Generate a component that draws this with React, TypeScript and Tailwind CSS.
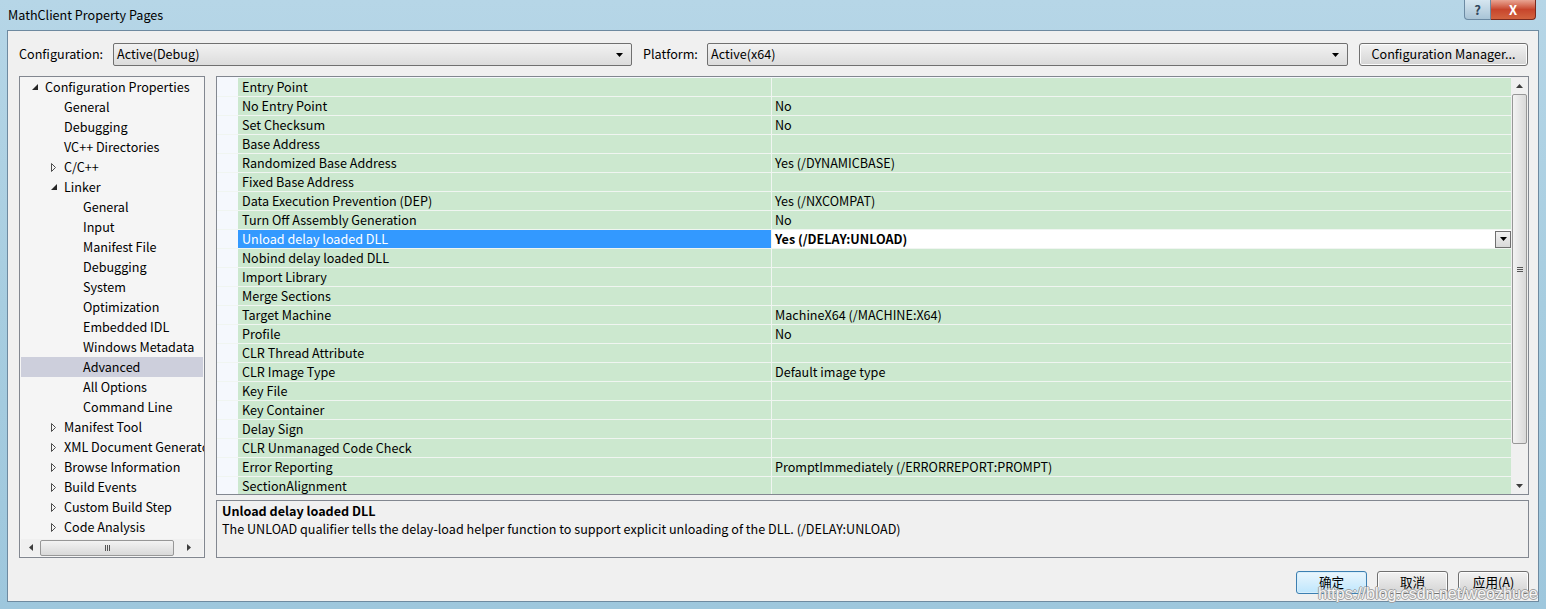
import React from 'react'

type TreeItem = { label: string; level: number; arrow?: 'open' | 'closed'; selected?: boolean }

const tree: TreeItem[] = [
  { label: 'Configuration Properties', level: 0, arrow: 'open' },
  { label: 'General', level: 1 },
  { label: 'Debugging', level: 1 },
  { label: 'VC++ Directories', level: 1 },
  { label: 'C/C++', level: 1, arrow: 'closed' },
  { label: 'Linker', level: 1, arrow: 'open' },
  { label: 'General', level: 2 },
  { label: 'Input', level: 2 },
  { label: 'Manifest File', level: 2 },
  { label: 'Debugging', level: 2 },
  { label: 'System', level: 2 },
  { label: 'Optimization', level: 2 },
  { label: 'Embedded IDL', level: 2 },
  { label: 'Windows Metadata', level: 2 },
  { label: 'Advanced', level: 2, selected: true },
  { label: 'All Options', level: 2 },
  { label: 'Command Line', level: 2 },
  { label: 'Manifest Tool', level: 1, arrow: 'closed' },
  { label: 'XML Document Generator', level: 1, arrow: 'closed' },
  { label: 'Browse Information', level: 1, arrow: 'closed' },
  { label: 'Build Events', level: 1, arrow: 'closed' },
  { label: 'Custom Build Step', level: 1, arrow: 'closed' },
  { label: 'Code Analysis', level: 1, arrow: 'closed' },
]

const props: [string, string][] = [
  ['Entry Point', ''],
  ['No Entry Point', 'No'],
  ['Set Checksum', 'No'],
  ['Base Address', ''],
  ['Randomized Base Address', 'Yes (/DYNAMICBASE)'],
  ['Fixed Base Address', ''],
  ['Data Execution Prevention (DEP)', 'Yes (/NXCOMPAT)'],
  ['Turn Off Assembly Generation', 'No'],
  ['Unload delay loaded DLL', 'Yes (/DELAY:UNLOAD)'],
  ['Nobind delay loaded DLL', ''],
  ['Import Library', ''],
  ['Merge Sections', ''],
  ['Target Machine', 'MachineX64 (/MACHINE:X64)'],
  ['Profile', 'No'],
  ['CLR Thread Attribute', ''],
  ['CLR Image Type', 'Default image type'],
  ['Key File', ''],
  ['Key Container', ''],
  ['Delay Sign', ''],
  ['CLR Unmanaged Code Check', ''],
  ['Error Reporting', 'PromptImmediately (/ERRORREPORT:PROMPT)'],
  ['SectionAlignment', ''],
]

const font = { fontFamily: '"Noto Sans CJK SC", "Noto Sans", sans-serif' }

function DownTri({ className = '' }: { className?: string }) {
  return (
    <svg width="7" height="4" viewBox="0 0 7 4" className={className}>
      <polygon points="0,0 7,0 3.5,4" fill="#000" />
    </svg>
  )
}

function Arrow({ kind }: { kind?: 'open' | 'closed' }) {
  if (kind === 'open')
    return (
      <svg width="6" height="6" viewBox="0 0 6 6">
        <polygon points="6,0 6,6 0,6" fill="#262626" />
      </svg>
    )
  if (kind === 'closed')
    return (
      <svg width="5" height="9" viewBox="0 0 5 9">
        <polygon points="0.5,0.5 4.5,4.5 0.5,8.5" fill="none" stroke="#4d4d4d" strokeWidth="1" />
      </svg>
    )
  return null
}

function Combo({ value, width }: { value: string; width: string }) {
  return (
    <div
      className={`${width} h-[23px] flex items-center justify-between pl-[3px] pr-[8px] border border-[#707070] rounded-[2px] bg-gradient-to-b from-[#f2f2f2] to-[#dcdcdc] text-[12.6px] text-black`}
    >
      <span>{value}</span>
      <DownTri />
    </div>
  )
}

function Btn({ label, primary, width = 'w-[71px]' }: { label: string; primary?: boolean; width?: string }) {
  return (
    <div
      className={`${width} h-[23px] flex items-center justify-center rounded-[3px] border text-[12.6px] leading-[16px] pb-[2px] text-black ${
        primary
          ? 'border-[#3c7fb1] bg-gradient-to-b from-[#eaf6fd] to-[#bee6fd] shadow-[inset_0_0_0_1px_#d8eefb]'
          : 'border-[#707070] bg-gradient-to-b from-[#f2f2f2] to-[#d4d4d4] shadow-[inset_0_0_0_1px_#fcfcfc]'
      }`}
    >
      {label}
    </div>
  )
}

export default function App() {
  return (
    <div
      className="w-[1546px] h-[609px] relative flex flex-col bg-gradient-to-b from-[#b6d6e7] via-[#a7cde0] to-[#9ec7dd] overflow-hidden"
      style={font}
    >
      {/* title bar */}
      <div className="h-[30px] flex items-center justify-between pl-[8px] pr-[10px] shrink-0">
        <span className="text-[12.6px] text-black">MathClient Property Pages</span>
        <div className="self-start flex">
          <div className="w-[27px] h-[20px] flex items-center justify-center border border-[#6b8aa3] border-t-0 rounded-bl-[4px] bg-gradient-to-b from-[#d6e6f0] to-[#a9c4d6] text-[13px] font-bold text-[#30465a]">
            ?
          </div>
          <div className="w-[45px] h-[20px] flex items-center justify-center border border-[#7a2a1e] border-t-0 border-l-0 rounded-br-[4px] bg-gradient-to-b from-[#e8a493] via-[#c7452c] to-[#d2633f] text-[13px] font-bold text-white">
            X
          </div>
        </div>
      </div>

      {/* client area */}
      <div className="flex-1 mx-[7px] mb-[7px] border border-[#6e8aa0] bg-[#f0f0f0] flex flex-col pl-[11px] pr-[9px] pt-[12px]">
        <div className="flex items-center h-[23px] text-[12.6px] text-black">
          <span className="w-[94px]">Configuration:</span>
          <Combo value="Active(Debug)" width="w-[519px]" />
          <span className="ml-[11px] w-[64px]">Platform:</span>
          <Combo value="Active(x64)" width="w-[641px]" />
          <div className="ml-[11px] w-[169px] h-[23px] flex items-center justify-center rounded-[3px] border border-[#707070] bg-gradient-to-b from-[#f2f2f2] to-[#d4d4d4] shadow-[inset_0_0_0_1px_#fcfcfc]">
            Configuration Manager...
          </div>
        </div>

        <div className="flex mt-[10px] h-[482px] gap-[11px]">
          {/* tree */}
          <div className="w-[186px] border border-[#828790] bg-[#f5f5f5] flex flex-col">
            <div className="flex-1 overflow-hidden">
              {tree.map((t, i) => (
                <div
                  key={i}
                  className={`h-[20px] flex items-center whitespace-nowrap text-[12.6px] text-black mx-[1px] ${
                    t.selected ? 'bg-[#cdcfdc]' : ''
                  }`}
                >
                  <div className="shrink-0" style={{ width: 11 + t.level * 19 }} />
                  <div className="w-[13px] shrink-0 flex items-center">
                    <Arrow kind={t.arrow} />
                  </div>
                  <span>{t.label}</span>
                </div>
              ))}
            </div>
            {/* horizontal scrollbar */}
            <div className="h-[17px] mb-[1px] flex items-center bg-[#f0f0f0] mx-[1px]">
              <div className="w-[19px] flex justify-center">
                <svg width="4" height="7" viewBox="0 0 4 7">
                  <polygon points="4,0 4,7 0,3.5" fill="#3d3d3d" />
                </svg>
              </div>
              <div className="w-[134px] h-[16px] rounded-[2px] border border-[#979797] bg-gradient-to-b from-[#f3f3f3] to-[#d9d9d9] flex items-center justify-center">
                <div className="flex gap-[1px]">
                  <div className="w-[1px] h-[6px] bg-[#555]" />
                  <div className="w-[1px] h-[6px] bg-[#555]" />
                  <div className="w-[1px] h-[6px] bg-[#555]" />
                </div>
              </div>
              <div className="flex-1 flex justify-center">
                <svg width="4" height="7" viewBox="0 0 4 7">
                  <polygon points="0,0 0,7 4,3.5" fill="#3d3d3d" />
                </svg>
              </div>
            </div>
          </div>

          {/* right side */}
          <div className="flex-1 flex flex-col gap-[5px]">
            <div className="h-[419px] border border-[#828790] bg-[#f5f8fd] flex overflow-hidden">
              <div className="flex-1 pt-[1px] overflow-hidden">
                {props.map(([name, val], i) => {
                  const sel = i === 8
                  return (
                    <div key={i} className="h-[19px] flex border-b border-[#f0f5f1] text-[12.6px] whitespace-nowrap">
                      <div className="w-[21px] shrink-0" />
                      <div
                        className={`w-[533px] shrink-0 pl-[4px] flex items-center ${
                          sel ? 'bg-[#3399ff] text-white' : 'bg-[#cce8cf] text-black'
                        }`}
                      >
                        {name}
                      </div>
                      <div className="w-[1px] shrink-0 bg-[#f0f5f1]" />
                      <div
                        className={`flex-1 flex items-center justify-between pl-[3px] ${
                          sel ? 'bg-white text-black font-bold' : 'bg-[#cce8cf] text-black'
                        }`}
                      >
                        <span>{val}</span>
                        {sel && (
                          <div className="w-[16px] h-[17px] border border-[#707070] bg-gradient-to-b from-[#f2f2f2] to-[#d9d9d9] flex items-center justify-center">
                            <DownTri />
                          </div>
                        )}
                      </div>
                    </div>
                  )
                })}
              </div>
              {/* vertical scrollbar */}
              <div className="w-[17px] shrink-0 bg-[#f0f0f0] flex flex-col items-center">
                <div className="h-[17px] flex items-center justify-center">
                  <svg width="7" height="4" viewBox="0 0 7 4">
                    <polygon points="0,4 7,4 3.5,0" fill="#3d3d3d" />
                  </svg>
                </div>
                <div className="w-[15px] h-[350px] rounded-[2px] border border-[#979797] bg-gradient-to-r from-[#f3f3f3] to-[#d9d9d9] flex items-center justify-center">
                  <div className="flex flex-col gap-[1px]">
                    <div className="w-[6px] h-[1px] bg-[#555]" />
                    <div className="w-[6px] h-[1px] bg-[#555]" />
                    <div className="w-[6px] h-[1px] bg-[#555]" />
                  </div>
                </div>
                <div className="flex-1" />
                <div className="h-[17px] flex items-center justify-center">
                  <svg width="7" height="4" viewBox="0 0 7 4">
                    <polygon points="0,0 7,0 3.5,4" fill="#3d3d3d" />
                  </svg>
                </div>
              </div>
            </div>
            <div className="h-[58px] border border-[#828790] bg-[#f0f0f0] px-[5px] pt-[1px] text-[12.6px] text-black leading-[18px]">
              <div className="font-bold">Unload delay loaded DLL</div>
              <div>The UNLOAD qualifier tells the delay-load helper function to support explicit unloading of the DLL. (/DELAY:UNLOAD)</div>
            </div>
          </div>
        </div>

        <div className="flex justify-end gap-[10px] mt-[13px]">
          <Btn label="确定" primary />
          <Btn label="取消" />
          <Btn label="应用(A)" />
        </div>
      </div>

      {/* watermark */}
      <div
        className="absolute left-[1318px] top-[582px] text-[16px] text-white/90 whitespace-nowrap"
        style={{
          fontFamily: '"Liberation Sans", Arial, sans-serif',
          textShadow: '1px 0 0 #a0a0a0, -1px 0 0 #a0a0a0, 0 1px 0 #a0a0a0, 0 -1px 0 #a0a0a0',
        }}
      >
        https://blog.csdn.net/weozhuce
      </div>
    </div>
  )
}
